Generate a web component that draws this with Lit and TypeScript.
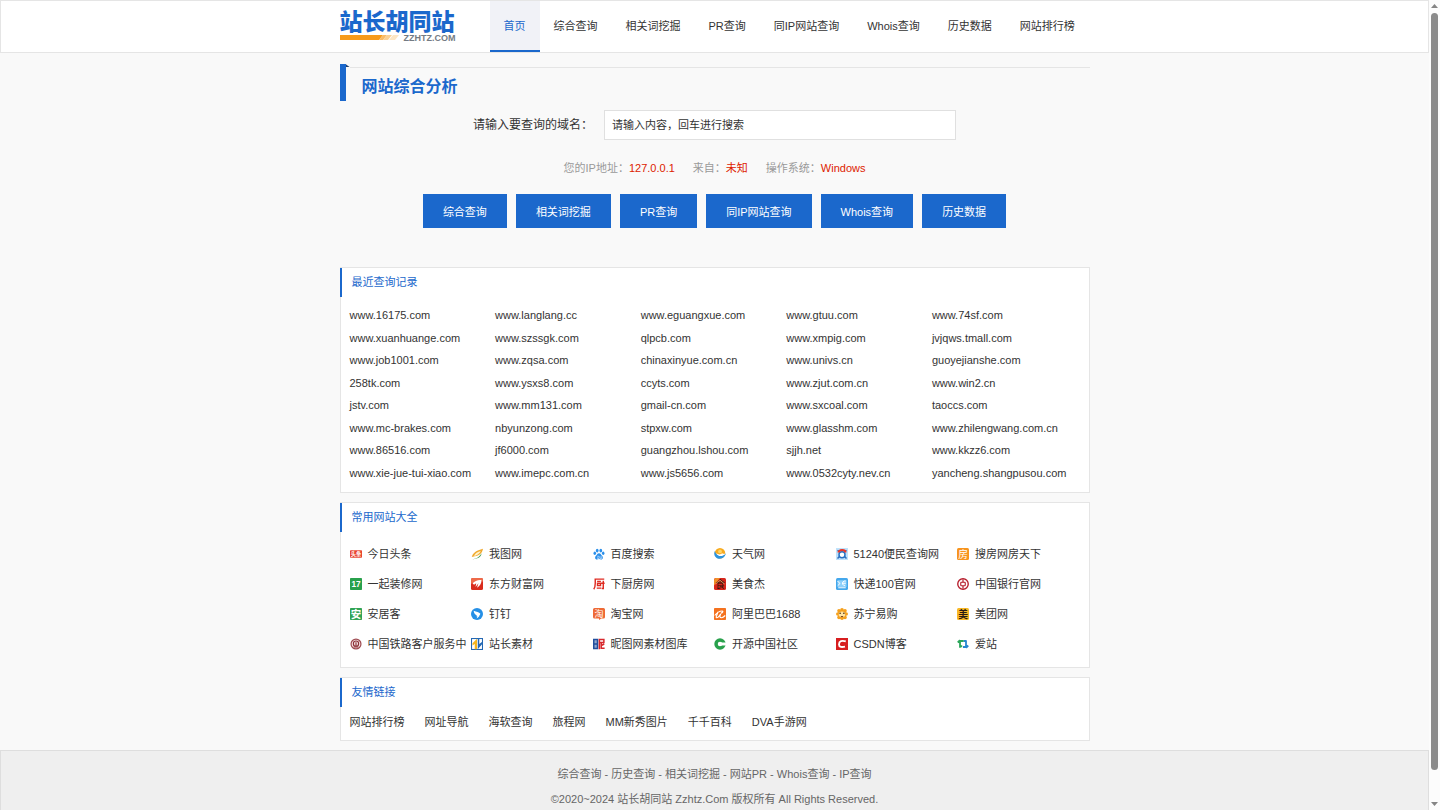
import { LitElement, html, svg, css, TemplateResult } from "lit";
import { customElement, property } from "lit/decorators.js";
import { classMap } from "lit/directives/class-map.js";

const NAV = ["首页", "综合查询", "相关词挖掘", "PR查询", "同IP网站查询", "Whois查询", "历史数据", "网站排行榜"];
const TOOLS = ["综合查询", "相关词挖掘", "PR查询", "同IP网站查询", "Whois查询", "历史数据"];

const RECENT = [
  "www.16175.com", "www.langlang.cc", "www.eguangxue.com", "www.gtuu.com", "www.74sf.com",
  "www.xuanhuange.com", "www.szssgk.com", "qlpcb.com", "www.xmpig.com", "jvjqws.tmall.com",
  "www.job1001.com", "www.zqsa.com", "chinaxinyue.com.cn", "www.univs.cn", "guoyejianshe.com",
  "258tk.com", "www.ysxs8.com", "ccyts.com", "www.zjut.com.cn", "www.win2.cn",
  "jstv.com", "www.mm131.com", "gmail-cn.com", "www.sxcoal.com", "taoccs.com",
  "www.mc-brakes.com", "nbyunzong.com", "stpxw.com", "www.glasshm.com", "www.zhilengwang.com.cn",
  "www.86516.com", "jf6000.com", "guangzhou.lshou.com", "sjjh.net", "www.kkzz6.com",
  "www.xie-jue-tui-xiao.com", "www.imepc.com.cn", "www.js5656.com", "www.0532cyty.nev.cn", "yancheng.shangpusou.com",
];

const SITES: [string, string][] = [
  ["toutiao", "今日头条"], ["ooopic", "我图网"], ["baidu", "百度搜索"], ["weather", "天气网"], ["bianmin", "51240便民查询网"], ["fang", "搜房网房天下"],
  ["yiqi", "一起装修网"], ["eastmoney", "东方财富网"], ["chufang", "下厨房网"], ["meishi", "美食杰"], ["kuaidi", "快递100官网"], ["boc", "中国银行官网"],
  ["anjuke", "安居客"], ["dingding", "钉钉"], ["taobao", "淘宝网"], ["alibaba", "阿里巴巴1688"], ["suning", "苏宁易购"], ["meituan", "美团网"],
  ["railway", "中国铁路客户服务中"], ["chinaz", "站长素材"], ["nipic", "昵图网素材图库"], ["oschina", "开源中国社区"], ["csdn", "CSDN博客"], ["aizhan", "爱站"],
];

const FRIENDS = ["网站排行榜", "网址导航", "海软查询", "旅程网", "MM新秀图片", "千千百科", "DVA手游网"];
const FOOTER = ["综合查询", "历史查询", "相关词挖掘", "网站PR", "Whois查询", "IP查询"];

const glyph = (text: string, fill: string, size = 13, y = 12.8, weight = 700) =>
  svg`<text x="8" y=${y} font-size=${size} font-weight=${weight} text-anchor="middle" fill=${fill}>${text}</text>`;

const ICONS: Record<string, TemplateResult> = {
  toutiao: svg`<rect y="3" width="16" height="10" rx="1" fill="#e8432f"/>${glyph("头条", "#fff", 7, 10.6)}`,
  ooopic: svg`<path d="M1 12C2 7 7 3 16 1c-1 6-5 9-11 10z" fill="#f0a92e"/><path d="M4 11c1-4 5-6 9-7-2 4-4 5-9 7z" fill="#fff3c8"/><path d="M0 15c5 0 11-2 14-8 0 5-5 8-14 8z" fill="#3f9a48"/>`,
  baidu: svg`<g fill="#2b8fea"><ellipse cx="5.6" cy="3.4" rx="1.8" ry="2.5"/><ellipse cx="10.4" cy="3.4" rx="1.8" ry="2.5"/><ellipse cx="2.4" cy="7" rx="1.7" ry="2.3"/><ellipse cx="13.6" cy="7" rx="1.7" ry="2.3"/><path d="M8 7c2 0 2.6 2 4 3.300 2 1.900 1.300 5-1.200 5-1 0-1.800-.5-2.800-.5s-1.800.5-2.800.5c-2.500 0-3.200-3.100-1.200-5C5.400 9 6 7 8 7z"/></g><path d="M5.500 11h2.500v3H6V12.500M9.500 11v3h2v-3" fill="none" stroke="#d7edff" stroke-width=".8"/>`,
  weather: svg`<circle cx="8" cy="7" r="7" fill="#f8aa1d"/><path d="M1 4c-3 8 5 13 11 9 2-1 3-3 4-6-5 5-13 4-15-3z" fill="#2c94df"/><path d="M3 7c2 5 9 5 13 0-2 1-4 1-5 0-2 2-5 2-8 0z" fill="#fff"/><circle cx="8" cy="4.500" r="2.500" fill="#ffd568"/>`,
  bianmin: svg`<rect width="16" height="16" fill="#bfe2fb"/><path d="M2 3l3 2M14 3l-3 2M2 14l3-3M14 14l-3-3" stroke="#2e6fbb" stroke-width="2"/><circle cx="8" cy="9" r="4" fill="#fff" stroke="#2671c4" stroke-width="2"/><path d="M3 6c1-4 9-5 10 0" fill="none" stroke="#e8382b" stroke-width="2.500"/>`,
  fang: svg`<rect width="16" height="16" rx="2" fill="#f7941d"/>${glyph("房", "#fff", 13, 12.8, 400)}`,
  yiqi: svg`<rect width="16" height="16" rx="1" fill="#29a14c"/>${glyph("17", "#fff", 11, 12)}`,
  eastmoney: svg`<rect width="16" height="16" rx="2" fill="#d92b1d"/><path d="M0 2a2 2 0 0 1 2-2h12a2 2 0 0 1 2 2v3C10 2 5 4 0 8z" fill="#ee6a4a"/><path d="M2 7c3-3 8-5 12-4 0 4-2 8-6 10l2-6-4 5 1-5-3 2z" fill="#fff"/>`,
  chufang: svg`<path d="M2 1.500h13M3 1v6c0 4-.5 6-2 8M5.500 4.500h5M6 7h4v3H6zM5 13.500h6M11 7h4.500M13.700 3.500V14h-2" fill="none" stroke="#df2a20" stroke-width="1.900"/>`,
  meishi: svg`<rect width="16" height="16" rx="2" fill="#d7261c"/><path d="M0 2L2 0h6L0 10z" fill="#f18f29"/>${glyph("食", "#2a160d", 13, 12.8, 400)}<path d="M2 8l6-5 6 5" fill="none" stroke="#ffdf88" stroke-width=".8"/>`,
  kuaidi: svg`<rect width="16" height="16" rx="2" fill="#45a8ec"/><path d="M2 3h12v9H2z" fill="#8ed0fa"/><path d="M2 4l3 3-2 3M13 4c-5-1-6 6-1 6M8 7h5M3 13h10" fill="none" stroke="#fff" stroke-width="1.300"/>`,
  boc: svg`<circle cx="8" cy="8" r="7" fill="none" stroke="#b61c2b" stroke-width="1.800"/><rect x="5" y="5.700" width="6" height="4.600" rx="1" fill="none" stroke="#b61c2b" stroke-width="1.500"/><path d="M8 2v3.500M8 10.500V14" stroke="#b61c2b" stroke-width="1.600"/>`,
  anjuke: svg`<rect width="16" height="16" rx="1" fill="#31a354"/>${glyph("安", "#fff", 14, 13)}`,
  dingding: svg`<circle cx="8" cy="8" r="8" fill="#258fe6"/><path d="M3.500 3.500c4 1.500 7 2 9 4-.4 1.500-1.200 2.600-2.200 3.500h1L7.500 14l1-3H7l.7-1.200C5.500 9 4.500 7.500 4 5.800z" fill="#fff"/>`,
  taobao: svg`<path d="M2 0h12a2 2 0 0 1 2 2v10a2 2 0 0 1-2 2h-3l-3 2v-2H2a2 2 0 0 1-2-2V2a2 2 0 0 1 2-2z" fill="#ee6a35"/>${glyph("淘", "#fff", 12, 11.5, 400)}`,
  alibaba: svg`<rect width="16" height="16" rx="1" fill="#f4721f"/><path d="M1 10c3-4 7-6 10-6 2 0 0 3-2 3M5 5c0 4-4 8-1 8 2 0 3-3 5-5-2 4-1 5 1 5s3-1 5-3" fill="none" stroke="#fff" stroke-width="1.500"/>`,
  suning: svg`<g fill="#f5a01d"><circle cx="8" cy="8" r="5.500"/><circle cx="4" cy="3.700" r="2.400"/><circle cx="12" cy="3.700" r="2.400"/><circle cx="8" cy="2.400" r="2.400"/><circle cx="2.400" cy="8" r="2.400"/><circle cx="13.600" cy="8" r="2.400"/><circle cx="4" cy="12.500" r="2.400"/><circle cx="12" cy="12.500" r="2.400"/><circle cx="8" cy="13.600" r="2.400"/></g><ellipse cx="8" cy="8.500" rx="4.300" ry="3.700" fill="#ffe3a0"/><circle cx="5.500" cy="7" r="1.100" fill="#4b2a10"/><circle cx="10.500" cy="7" r="1.100" fill="#4b2a10"/><path d="M6 10.500h4l-2 2z" fill="#6c3513"/>`,
  meituan: svg`<rect width="16" height="16" rx="2" fill="#f9b826"/>${glyph("美", "#2a1d12", 13)}`,
  railway: svg`<circle cx="8" cy="8" r="6.600" fill="#f4e3e3" stroke="#9e4a50" stroke-width="1.600"/><circle cx="8" cy="7.500" r="3.500" fill="none" stroke="#8d3038" stroke-width="1.500"/><path d="M8 5.500v5M5 12h6" stroke="#8d3038" stroke-width="1.500"/>`,
  chinaz: svg`<rect x=".7" y=".7" width="14.600" height="14.600" fill="#fff" stroke="#2468b3" stroke-width="1.400"/><path d="M8 1L2 7v3l3-2v7h3z" fill="#f6b51e"/><path d="M9 1h2v7l4-3v3l-6 7z" fill="#2468b3"/>`,
  nipic: svg`<path d="M1 2h5v12H1zM1 8h5" fill="#214f9e" fill-opacity=".5" stroke="#214f9e" stroke-width="2"/><path d="M8.500 15V2h6v4h-6M11 7v6.500h4.500M15 8l-4 2" fill="none" stroke="#d7282d" stroke-width="2"/>`,
  oschina: svg`<circle cx="8" cy="8" r="5.300" fill="none" stroke="#29a14c" stroke-width="4.600"/><path d="M9 6h7v4H9z" fill="#fff"/>`,
  csdn: svg`<rect width="16" height="16" fill="#d71e20"/><path d="M13 4.500C8 3 4 4 4 8.500c0 4 4 4 8 3" fill="none" stroke="#fff" stroke-width="2.500"/>`,
  aizhan: svg`<path d="M9 4H4v9M1 6l3-3M4 11h3" fill="none" stroke="#2ba65a" stroke-width="2.400"/><path d="M8 12h4V3M15 10l-3 3M12 4H9" fill="none" stroke="#2787d0" stroke-width="2.400"/>`,
};

const FONT = css`"Liberation Sans", "Noto Sans CJK SC", sans-serif`;

@customElement("site-logo")
export class SiteLogo extends LitElement {
  static styles = css`
    :host { display: block; width: 116px; }
    .home { display: flex; flex-direction: column; gap: 2px; text-decoration: none; color: #1b68cc; }
    .name { font: 900 23px/26px "Noto Sans CJK SC", sans-serif; white-space: nowrap; }
    .under { display: flex; align-items: flex-start; justify-content: space-between; height: 7px; }
    .stripe { width: 60px; height: 5px; }
    .domain { font: 700 9px/7px "Liberation Sans", sans-serif; color: #747b83; }
  `;
  render() {
    return html`<a class="home" href="#">
      <span class="name">站长胡同站</span>
      <span class="under">
        <svg class="stripe" viewBox="0 0 60 5" aria-hidden="true">
          <path d="M0 0H43L39 5H0z" fill="#f79a1a" />
          <path d="M43 0h4l-4 5h-4z" fill="#f9bb66" />
          <path d="M47 0h5l-4 5h-5z" fill="#fbd093" />
          <path d="M53 0h6l-4 5h-6z" fill="#fde6c4" />
        </svg>
        <span class="domain">ZZHTZ.COM</span>
      </span>
    </a>`;
  }
}

@customElement("site-icon")
export class SiteIcon extends LitElement {
  @property() name = "";
  static styles = css`
    :host { display: block; flex: none; width: 12px; height: 12px; }
    .icon { display: block; width: 100%; height: 100%; font-family: ${FONT}; }
  `;
  render() {
    return html`<svg class="icon" viewBox="0 0 16 16" aria-hidden="true">${ICONS[this.name]}</svg>`;
  }
}

@customElement("info-panel")
export class InfoPanel extends LitElement {
  @property() heading = "";
  static styles = css`
    :host { display: block; background: #fff; border: 1px solid #e5e5e5; font-family: ${FONT}; }
    .heading {
      margin: 0 0 0 -1px; padding-left: 10px; border-left: 2px solid #1b68cc;
      font-size: 11px; line-height: 29px; font-weight: 400; color: #1b68cc;
    }
  `;
  render() {
    return html`<h2 class="heading">${this.heading}</h2><slot></slot>`;
  }
}

@customElement("app-root")
export class AppRoot extends LitElement {
  static styles = css`
    :host {
      display: flex; height: 100vh; overflow: hidden; background: #f9f9f9; color: #333;
      font-family: ${FONT}; font-size: 11px; line-height: 20px;
    }
    a { color: inherit; text-decoration: none; }
    ul { list-style: none; margin: 0; padding: 0; }
    .page { flex: 1; min-width: 0; overflow-y: auto; scrollbar-width: none; }
    .wrap { max-width: 750px; margin: 0 auto; }
    .header { background: #fff; border: 1px solid #e5e5e5; }
    .bar { display: flex; gap: 34px; }
    .logo { margin-top: 6px; }
    .nav { display: flex; white-space: nowrap; }
    .nav-link { display: block; padding: 2px 14px 0; line-height: 47px; border-bottom: 2px solid transparent; }
    .nav-link.active { color: #1b68cc; background: #f1f2f7; border-bottom-color: #1b68cc; }

    .head { display: flex; align-items: flex-start; margin-top: 11px; }
    .mark { width: 6px; height: 37px; background: #1b68cc; }
    .fold { width: 4px; height: 3px; background: #24406b; clip-path: polygon(0 0, 100% 100%, 0 100%); }
    .title {
      flex: 1; margin: 3px 0 0; padding-left: 12px; border-top: 1px solid #e5e5e5;
      font-size: 16px; line-height: 37px; font-weight: 700; color: #1b68cc;
    }
    .search { display: flex; justify-content: center; align-items: center; gap: 11px; margin-top: 5px; }
    .label { font-size: 12px; }
    .field {
      box-sizing: border-box; width: 352px; height: 30px; padding: 0 7px; margin: 0;
      border: 1px solid #e0e0e0; background: #fff; color: #333; outline: 0;
      font-family: inherit; font-size: 11px;
    }
    .field::placeholder { color: #333; opacity: 1; }
    .client { display: flex; justify-content: center; gap: 18px; margin-top: 18px; color: #999; }
    .value { color: #dd2200; }
    .tools { display: flex; justify-content: center; gap: 9px; margin-top: 16px; }
    .tool {
      height: 34px; padding: 0 20px; border: 0; background: #1b68cc; color: #fff;
      font-family: inherit; font-size: 11px; white-space: nowrap; cursor: pointer;
    }
    .panels { display: flex; flex-direction: column; gap: 9px; margin-top: 39px; }
    .recent {
      display: grid; grid-template: repeat(8, 1fr) / repeat(5, minmax(0, 1fr)); align-items: center;
      min-height: 180px; padding: 7px 11px 8px 9px; white-space: nowrap;
    }
    .sites {
      display: grid; grid-template-columns: repeat(6, minmax(0, 1fr));
      padding: 7px 10px 8px 9px; line-height: 30px; white-space: nowrap;
    }
    .site { display: flex; align-items: center; gap: 6px; }
    .friends { display: flex; flex-wrap: wrap; gap: 0 20px; padding: 5px 9px 8px; }
    .footer {
      margin-top: 9px; padding: 11px 0; background: #efefef; border: 1px solid #dedede;
      color: #666; text-align: center; line-height: 25px;
    }
    .line { margin: 0; }

    .scroll { display: flex; flex-direction: column; align-items: center; width: 11px; padding: 4px 0; box-sizing: border-box; background: #fcfcfc; }
    .arrow { width: 7px; height: 4px; background: #858585; }
    .up { clip-path: polygon(50% 0, 100% 100%, 0 100%); }
    .down { clip-path: polygon(0 0, 100% 0, 50% 100%); }
    .thumb { flex: 1; width: 7px; margin: 5px 0 32px; border-radius: 4px; background: #8b8b8b; }
  `;

  render() {
    return html`
      <div class="page">
        <header class="header">
          <div class="wrap bar">
            <site-logo class="logo"></site-logo>
            <nav class="nav">
              ${NAV.map((t, i) => html`<a href="#" class=${classMap({ "nav-link": true, active: i === 0 })}>${t}</a>`)}
            </nav>
          </div>
        </header>
        <main class="wrap">
          <div class="head">
            <span class="mark"></span><span class="fold"></span>
            <h1 class="title">网站综合分析</h1>
          </div>
          <form class="search" @submit=${(e: Event) => e.preventDefault()}>
            <label class="label" for="domain">请输入要查询的域名：</label>
            <input class="field" id="domain" type="text" placeholder="请输入内容，回车进行搜索" />
          </form>
          <div class="client">
            <span>您的IP地址：<span class="value">127.0.0.1</span></span>
            <span>来自：<span class="value">未知</span></span>
            <span>操作系统：<span class="value">Windows</span></span>
          </div>
          <div class="tools">${TOOLS.map((t) => html`<button class="tool" type="button">${t}</button>`)}</div>
          <div class="panels">
            <info-panel heading="最近查询记录">
              <ul class="recent">${RECENT.map((t) => html`<li><a href="#">${t}</a></li>`)}</ul>
            </info-panel>
            <info-panel heading="常用网站大全">
              <ul class="sites">
                ${SITES.map(([icon, t]) => html`<li><a class="site" href="#"><site-icon name=${icon}></site-icon>${t}</a></li>`)}
              </ul>
            </info-panel>
            <info-panel heading="友情链接">
              <ul class="friends">${FRIENDS.map((t) => html`<li><a href="#">${t}</a></li>`)}</ul>
            </info-panel>
          </div>
        </main>
        <footer class="footer">
          <p class="line">${FOOTER.map((t, i) => html`${i ? " - " : ""}<a href="#">${t}</a>`)}</p>
          <p class="line">©2020~2024 站长胡同站 Zzhtz.Com 版权所有 All Rights Reserved.</p>
        </footer>
      </div>
      <div class="scroll" aria-hidden="true">
        <span class="arrow up"></span><span class="thumb"></span><span class="arrow down"></span>
      </div>
    `;
  }
}
